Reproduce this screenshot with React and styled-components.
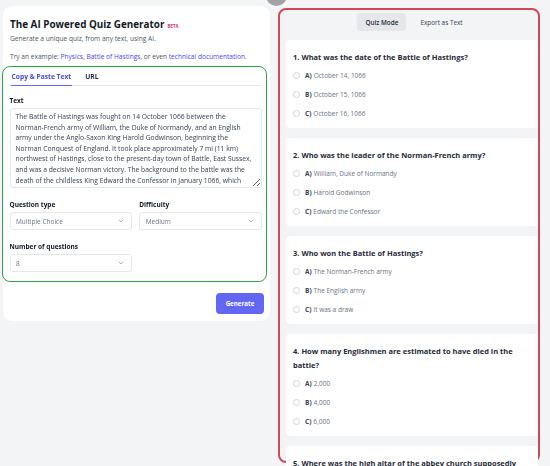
import React from "react";
import styled, { createGlobalStyle } from "styled-components";
import { ChevronDown } from "lucide-react";

const FONT = `"Open Sans", "Noto Sans", Arial, sans-serif`;

const Global = createGlobalStyle`
  html, body { margin: 0; padding: 0; background: #f3f4f6; }
  body { font-family: ${FONT}; color: #111827; overflow: hidden; }
  * { box-sizing: border-box; }
`;

const Page = styled.div`
  position: relative;
  display: flex;
  align-items: flex-start;
  gap: 8px;
  padding: 6px 0 0 3px;
  height: 466px;
  overflow: hidden;
`;

const Knob = styled.div`
  position: absolute;
  left: 266px;
  top: -15px;
  width: 21px;
  height: 21px;
  border-radius: 50%;
  background: #a3a3a5;
  box-shadow: 0 0 0 3px #f7f7f8;
`;

const LeftCard = styled.section`
  width: 267px;
  background: #fff;
  border-radius: 9px;
  padding: 12px 0 7px;
  display: flex;
  flex-direction: column;
`;

const Header = styled.div`
  padding: 0 7px;
`;

const Title = styled.h1`
  margin: 0;
  font-size: 9.9px;
  line-height: 13px;
  font-weight: 700;
  color: #111827;
  display: flex;
  align-items: baseline;
  gap: 3px;
`;

const Beta = styled.span`
  font-size: 4.3px;
  font-weight: 700;
  color: #db2777;
  letter-spacing: 0.1px;
`;

const Sub = styled.p`
  margin: ${(p) => p.$mt || 0}px 0 0;
  font-size: 6.6px;
  line-height: 9px;
  color: #4b5563;
`;

const Link = styled.a`
  color: #4f46e5;
  text-decoration: none;
`;

const Form = styled.div`
  margin: 5px 3px 0 -1px;
  border: 1.5px solid #2ea44a;
  border-radius: 8px;
  padding: 3px 4px 9px 6.5px;
`;

const Tabs = styled.div`
  display: flex;
  gap: 12px;
  border-bottom: 1px solid #e5e7eb;
  padding-left: 1px;
`;

const Tab = styled.div`
  font-size: 6.7px;
  font-weight: 700;
  line-height: 10px;
  padding: 2px 1px 3px;
  color: ${(p) => (p.$active ? "#4f46e5" : "#1f2937")};
  border-bottom: 1.5px solid ${(p) => (p.$active ? "#6366f1" : "transparent")};
  margin-bottom: -1px;
`;

const Label = styled.div`
  font-size: 6.5px;
  font-weight: 700;
  color: #111827;
  line-height: 9px;
  margin: ${(p) => p.$mt || 0}px 0 3px;
`;

const TextArea = styled.textarea`
  display: block;
  width: 100%;
  height: 80px;
  border: 1px solid #e5e7eb;
  border-radius: 3px;
  padding: 3px 9px 0 5px;
  font-family: ${FONT};
  font-size: 6.75px;
  line-height: 10.6px;
  color: #374151;
  resize: vertical;
  overflow-y: scroll;
  outline: none;
  &::-webkit-scrollbar { width: 8px; }
  &::-webkit-scrollbar-track { background: #f1f1f1; }
  &::-webkit-scrollbar-thumb { background: #c1c1c1; border: 1px solid #f1f1f1; }
  &::-webkit-scrollbar-button:single-button { height: 7px; background: #f1f1f1; display: block; }
`;

const Grid = styled.div`
  display: grid;
  grid-template-columns: 1fr 1fr;
  column-gap: 7px;
`;

const Field = styled.div`
  display: flex;
  flex-direction: column;
`;

const Select = styled.div`
  height: 18px;
  border: 1px solid #e5e7eb;
  border-radius: 3px;
  display: flex;
  align-items: center;
  justify-content: space-between;
  padding: 0 6px 0 5.5px;
  font-size: 6.5px;
  color: #6b7280;
`;

const Footer = styled.div`
  display: flex;
  justify-content: flex-end;
  padding: 11px 6px 0;
`;

const Button = styled.button`
  width: 48px;
  height: 21px;
  border: none;
  border-radius: 4px;
  background: #6366f1;
  color: #fff;
  font-family: ${FONT};
  font-size: 6.2px;
  font-weight: 700;
`;

const RightPanel = styled.section`
  margin-top: 2px;
  width: 262px;
  height: 455px;
  border: 2px solid #cf4a56;
  border-radius: 8px;
  background: #f3f4f6;
  overflow: visible;
  display: flex;
  flex-direction: column;
  padding: 3px 0 0 6px;
`;

const ModeBar = styled.div`
  display: flex;
  justify-content: center;
  gap: 6px;
  padding-left: 4px;
  margin-bottom: 9px;
`;

const ModeBtn = styled.div`
  height: 18px;
  padding: 0 8px;
  display: flex;
  align-items: center;
  border-radius: 3px;
  font-size: 6.4px;
  color: ${(p) => (p.$active ? "#1f2937" : "#374151")};
  font-weight: ${(p) => (p.$active ? 600 : 400)};
  background: ${(p) => (p.$active ? "#e5e7eb" : "transparent")};
`;

const Cards = styled.div`
  display: flex;
  flex-direction: column;
  gap: 10px;
`;

const Card = styled.div`
  background: #fff;
  border-radius: 4px 0 0 4px;
  padding: 10px 18px 5px 7px;
`;

const Question = styled.div`
  font-size: 7.5px;
  font-weight: 700;
  line-height: 14px;
  color: #1f2937;
  margin-bottom: 2px;
`;

const Option = styled.label`
  height: 19px;
  display: flex;
  align-items: center;
  gap: 5px;
  font-size: 6.5px;
  color: #6b7280;
`;

const Radio = styled.span`
  width: 7px;
  height: 7px;
  border-radius: 50%;
  border: 1px solid #d1d5db;
  background: #fff;
  flex: none;
`;

const Letter = styled.b`
  color: #374151;
  font-weight: 700;
  margin-right: 2px;
`;

const TEXT =
  "The Battle of Hastings was fought on 14 October 1066 between the Norman-French army of William, the Duke of Normandy, and an English army under the Anglo-Saxon King Harold Godwinson, beginning the Norman Conquest of England. It took place approximately 7 mi (11 km) northwest of Hastings, close to the present-day town of Battle, East Sussex, and was a decisive Norman victory. The background to the battle was the death of the childless King Edward the Confessor in January 1066, which set up a succession struggle between several claimants to his throne. Harold was crowned king shortly after Edward's death, but faced invasions by William, his own brother Tostig, and the Norwegian King Harald Hardrada (Harald III of Norway).";

const QUESTIONS = [
  { q: "1. What was the date of the Battle of Hastings?", o: ["October 14, 1066", "October 15, 1066", "October 16, 1066"] },
  { q: "2. Who was the leader of the Norman-French army?", o: ["William, Duke of Normandy", "Harold Godwinson", "Edward the Confessor"] },
  { q: "3. Who won the Battle of Hastings?", o: ["The Norman-French army", "The English army", "It was a draw"] },
  { q: "4. How many Englishmen are estimated to have died in the battle?", o: ["2,000", "4,000", "6,000"] },
  { q: "5. Where was the high altar of the abbey church supposedly placed?", o: ["Where Harold died", "Where William landed", "On Senlac Hill"] },
];

export default function App() {
  return (
    <>
      <Global />
      <Page>
        <Knob />
        <LeftCard>
          <Header>
            <Title>
              The AI Powered Quiz Generator <Beta>BETA</Beta>
            </Title>
            <Sub $mt={1}>Generate a unique quiz, from any text, using AI.</Sub>
            <Sub $mt={9}>
              Try an example: <Link>Physics</Link>, <Link>Battle of Hastings</Link>, or even{" "}
              <Link>technical documentation</Link>.
            </Sub>
          </Header>
          <Form>
            <Tabs>
              <Tab $active>Copy &amp; Paste Text</Tab>
              <Tab>URL</Tab>
            </Tabs>
            <Label $mt={10}>Text</Label>
            <TextArea defaultValue={TEXT} />
            <Grid>
              <Field>
                <Label $mt={12}>Question type</Label>
                <Select>
                  Multiple Choice <ChevronDown size={8} strokeWidth={1.6} color="#6b7280" />
                </Select>
              </Field>
              <Field>
                <Label $mt={12}>Difficulty</Label>
                <Select>
                  Medium <ChevronDown size={8} strokeWidth={1.6} color="#6b7280" />
                </Select>
              </Field>
              <Field>
                <Label $mt={12}>Number of questions</Label>
                <Select>
                  8 <ChevronDown size={8} strokeWidth={1.6} color="#6b7280" />
                </Select>
              </Field>
            </Grid>
          </Form>
          <Footer>
            <Button>Generate</Button>
          </Footer>
        </LeftCard>
        <RightPanel>
          <ModeBar>
            <ModeBtn $active>Quiz Mode</ModeBtn>
            <ModeBtn>Export as Text</ModeBtn>
          </ModeBar>
          <Cards>
            {QUESTIONS.map((item) => (
              <Card key={item.q}>
                <Question>{item.q}</Question>
                {item.o.map((opt, i) => (
                  <Option key={opt}>
                    <Radio />
                    <span>
                      <Letter>{"ABC"[i]})</Letter>
                      {opt}
                    </span>
                  </Option>
                ))}
              </Card>
            ))}
          </Cards>
        </RightPanel>
      </Page>
    </>
  );
}
